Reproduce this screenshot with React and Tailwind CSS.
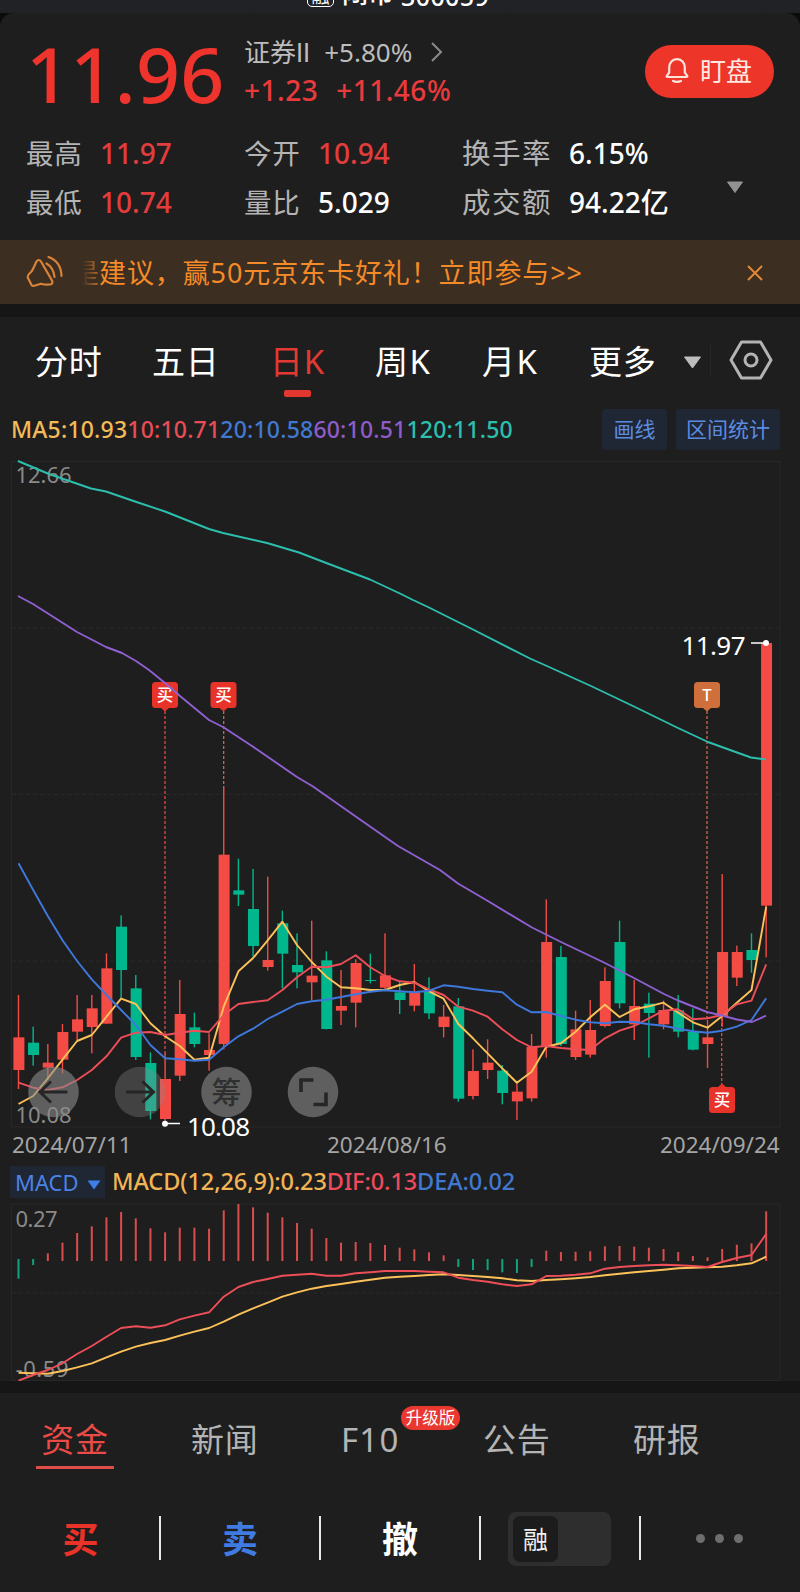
import React from "react";

const RED = "#f44b44";
const GREEN = "#00b78d";
const STEP = 14.66;
const xAt = (i) => 18.5 + STEP * i;
const priceY = (v) => 760 + v / 3;
const macdY = (v) => 1150 + v / 3;

// direction, high, body top, body bottom, low
const candles = [
  ["r", 705, 832, 930, 987], ["g", 800, 848, 885, 917], ["r", 852, 908, 923, 960], ["r", 792, 816, 899, 940],
  ["r", 705, 778, 815, 840], ["r", 705, 745, 801, 880], ["r", 580, 625, 791, 791], ["g", 466, 500, 630, 715],
  ["g", 645, 685, 891, 900], ["g", 877, 909, 1053, 1078], ["r", 880, 957, 1077, 1090], ["r", 660, 762, 947, 963],
  ["g", 758, 802, 852, 862], ["r", 820, 870, 885, 932], ["r", 82, 284, 852, 868], ["g", 296, 391, 404, 438],
  ["g", 327, 447, 558, 590], ["r", 350, 600, 621, 632], ["g", 452, 490, 581, 685], ["g", 520, 615, 637, 685],
  ["r", 482, 647, 667, 720], ["g", 574, 601, 807, 808], ["r", 630, 738, 752, 795], ["r", 598, 609, 728, 802],
  ["g", 581, 660, 663, 670], ["r", 520, 646, 683, 690], ["g", 665, 697, 720, 762], ["r", 612, 697, 737, 754],
  ["g", 652, 692, 760, 777], ["r", 735, 770, 801, 832], ["g", 714, 739, 1016, 1025], ["r", 868, 933, 1008, 1018],
  ["r", 838, 908, 930, 957], ["g", 915, 932, 999, 1033], ["r", 970, 995, 1024, 1080], ["r", 822, 861, 1015, 1025],
  ["r", 418, 546, 858, 893], ["g", 558, 591, 852, 858], ["r", 752, 808, 891, 900], ["r", 720, 810, 884, 893],
  ["r", 622, 663, 798, 802], ["g", 482, 546, 730, 745], ["r", 660, 738, 793, 840], ["g", 698, 731, 759, 893],
  ["r", 722, 750, 793, 808], ["g", 705, 751, 815, 832], ["g", 745, 815, 869, 871], ["r", 780, 832, 852, 924],
  ["r", 342, 576, 768, 800], ["r", 557, 576, 653, 678], ["g", 520, 570, 600, 638], ["r", -351, -351, 437, 592],
];

const ma5 = [1032, 1008, 955, 899, 843, 825, 770, 716, 732, 790, 829, 858, 899, 893, 740, 634, 594, 541, 485, 555, 606, 650, 682, 685, 690, 690, 675, 666, 694, 716, 792, 835, 880, 925, 968, 935, 860, 850, 815, 772, 734, 771, 748, 739, 728, 758, 787, 803, 768, 728, 690, 440];
const ma10 = [968, 983, 990, 982, 960, 930, 889, 833, 818, 816, 825, 818, 812, 816, 765, 732, 726, 721, 690, 652, 620, 622, 612, 586, 622, 648, 664, 668, 688, 705, 740, 752, 770, 808, 840, 862, 858, 864, 868, 870, 835, 812, 798, 775, 752, 748, 778, 775, 765, 733, 722, 613];
const ma20 = [310, 390, 468, 541, 603, 658, 705, 750, 795, 855, 895, 898, 902, 899, 862, 829, 806, 777, 755, 732, 724, 719, 711, 703, 695, 691, 694, 697, 692, 676, 680, 687, 692, 697, 734, 757, 756, 768, 779, 787, 790, 785, 786, 793, 797, 806, 814, 818, 812, 800, 780, 715];
const dif = [692, 675, 660, 640, 612, 588, 560, 534, 529, 533, 526, 508, 497, 487, 440, 411, 396, 387, 377, 374, 371, 377, 377, 370, 367, 363, 363, 363, 365, 367, 383, 390, 395, 403, 408, 403, 378, 377, 374, 370, 356, 351, 348, 346, 344, 346, 348, 351, 336, 324, 315, 252];
const dea = [668, 670, 671, 663, 652, 640, 622, 605, 590, 579, 570, 557, 545, 534, 515, 494, 475, 458, 440, 427, 416, 408, 402, 395, 389, 383, 380, 378, 375, 373, 375, 378, 381, 385, 391, 393, 390, 388, 385, 381, 376, 371, 367, 363, 359, 355, 353, 352, 350, 346, 340, 320];
const bars = [386, 345, 310, 278, 249, 229, 202, 186, 205, 235, 247, 233, 233, 236, 181, 162, 172, 188, 202, 219, 236, 264, 278, 276, 279, 285, 293, 298, 307, 316, 351, 360, 360, 367, 369, 351, 302, 306, 305, 304, 289, 288, 290, 293, 297, 306, 318, 322, 297, 284, 280, 184];

const MA60 =
  "18,596 33,604 77,632 106,647 122,653 136,661 149,670 165,683 180,696 209,720 223,727 252,746 297,777 313,786.5 355,816 398,846 440,870 458,883.5 487,900.5 532,927.5 546,934.5 561,942 605,963 634,978 664,994 678,1000.5 707,1012 722,1015.5 737,1019.5 752,1022 766,1015.7";
const MA120 =
  "18,461 49,474 91,488.5 106,491.5 135,501.5 165,511.5 209,529 223,533 267,543 299,552.5 325,562.5 370,579.5 400,593.5 413,600 428,607 472,629 530,658.5 548,666.5 591,686 634,706.5 678,728 708,742 737,752.5 751,757.5 766,759.5";

const poly = (vals, fy) => vals.map((v, i) => `${xAt(i).toFixed(1)},${fy(v).toFixed(1)}`).join(" ");

function Line({ points, color }) {
  return <polyline points={points} fill="none" stroke={color} strokeWidth="1.9" strokeLinejoin="round" />;
}

function Marker({ x, y, label, color, up }) {
  return (
    <g>
      <rect x={x - 13} y={y} width="26" height="26" rx="3.5" fill={color} />
      <path d={up ? `M${x - 4} ${y}l4 -3.5l4 3.5z` : `M${x - 4} ${y + 26}l4 3.5l4 -3.5z`} fill={color} />
      <text x={x} y={y + 19} fontSize="16.5" fontWeight="500" fill="#fff" textAnchor="middle">
        {label}
      </text>
    </g>
  );
}

function PriceChart() {
  return (
    <svg className="block h-[677px] w-[800px] overflow-visible" viewBox="0 455 800 677">
      <rect x="11.5" y="461.5" width="768.5" height="665.5" fill="none" stroke="#272727" />
      {[628, 794.5, 961].map((y) => (
        <line key={y} x1="12" x2="780" y1={y} y2={y} stroke="#292929" strokeDasharray="4 3" />
      ))}
      <g fill="#8a8a8a" fontSize="22">
        <text x="15.5" y="483" textLength="56">12.66</text>
        <text x="15.5" y="1122.5" textLength="56">10.08</text>
      </g>
      <g strokeDasharray="3 2" strokeWidth="1.2" stroke="#ee4f48">
        <line x1="165" x2="165" y1="711" y2="1054" />
        <line x1="223.7" x2="223.7" y1="711" y2="788" stroke="#e06a64" />
        <line x1="707" x2="707" y1="711" y2="1020" stroke="#dd6a4c" />
        <line x1="721.7" x2="721.7" y1="1018" y2="1086" />
      </g>
      {candles.map(([d, hi, top, bot, lo], i) => (
        <g key={i} fill={d === "r" ? RED : GREEN}>
          <rect x={xAt(i) - 0.7} y={priceY(hi)} width="1.4" height={(lo - hi) / 3} />
          <rect x={xAt(i) - 5.1} y={priceY(top)} width="11" height={(bot - top) / 3} />
        </g>
      ))}
      <Marker x={165} y={682} label="买" color="#e8332b" />
      <Marker x={223.5} y={682} label="买" color="#e8332b" />
      <Marker x={707} y={682} label="T" color="#cf6f3c" />
      <Marker x={722} y={1087} label="买" color="#e8332b" up />
      <Line points={poly(ma5, priceY)} color="#fcc259" />
      <Line points={poly(ma10, priceY)} color="#ee4e58" />
      <Line points={poly(ma20, priceY)} color="#3f78dc" />
      <Line points={MA60} color="#9060d2" />
      <Line points={MA120} color="#2cbfae" />
      <g fill="#8b8b8b" fillOpacity="0.6">
        <circle cx="53.5" cy="1092" r="25.3" />
        <circle cx="140" cy="1092" r="25.3" fillOpacity="0.34" />
        <circle cx="226.5" cy="1092" r="25.3" />
        <circle cx="313" cy="1092" r="25.3" />
      </g>
      <g fill="none" stroke="#262626" strokeWidth="3">
        <path d="M67.5 1092H40M51 1081.5L40 1092L51 1102.5" />
        <path d="M126 1092H153.5M142.5 1081.5L153.5 1092L142.5 1102.5" />
        <path d="M301 1092V1080H313.5M326 1092.5V1104.5H313.5" strokeWidth="3.6" />
      </g>
      <text x="226.5" y="1103" fontSize="30" fontWeight="500" fill="#2f2f2f" textAnchor="middle">筹</text>
      <g stroke="#fff" fill="#fff" strokeWidth="1.4">
        <path d="M165 1123.5H180M751 643H766" />
        <circle cx="165" cy="1123.7" r="2.3" />
        <circle cx="766" cy="643" r="2.3" />
      </g>
      <g fill="#fff" fontSize="26">
        <text x="187" y="1135.5" textLength="63">10.08</text>
        <text x="681.5" y="655" textLength="64">11.97</text>
      </g>
    </svg>
  );
}

function MacdChart() {
  return (
    <svg className="block h-[182px] w-[800px]" viewBox="0 1199 800 182">
      <rect x="11.5" y="1204" width="768.5" height="176.5" fill="none" stroke="#272727" />
      <line x1="12" x2="780" y1="1293" y2="1293" stroke="#292929" strokeDasharray="4 3" />
      {bars.map((v, i) => {
        const down = v > 335;
        const y0 = down ? macdY(327) : macdY(v);
        return <rect key={i} x={xAt(i) - 1} y={y0} width="2" height={down ? (v - 327) / 3 : (333 - v) / 3} fill={down ? "#11a27f" : "#d94d4d"} />;
      })}
      <g fill="#8a8a8a" fontSize="22">
        <text x="15.5" y="1227" textLength="42">0.27</text>
        <text x="15.5" y="1377" textLength="53">-0.59</text>
      </g>
      <Line points={poly(dea, macdY)} color="#fcc259" />
      <Line points={poly(dif, macdY)} color="#ee4e58" />
    </svg>
  );
}

function Stat({ label, value, wide, red }) {
  return (
    <div className="flex h-[49px] items-center whitespace-nowrap">
      <span className={wide ? "w-[107px] text-[28.5px] tracking-[1.5px] text-[#b4b4b4]" : "w-[74px] text-[27.5px] tracking-[0.8px] text-[#b4b4b4]"}>{label}</span>
      <span className={red ? "-mt-px text-[28px] font-medium text-[#e23d3c]" : "-mt-px text-[28px] font-medium text-white"}>{value}</span>
    </div>
  );
}

export default function App() {
  return (
    <div className="flex h-[1592px] w-[800px] flex-col overflow-hidden bg-[#1e1e1e] font-['Noto_Sans','Noto_Sans_CJK_SC',sans-serif] leading-none text-white">
      <div className="h-[30px] shrink-0 bg-gradient-to-b from-[#202226] from-45% to-[#0b0b0b] to-45%">
        <div className="flex h-[13px] items-end overflow-hidden pl-[307px]">
          <span className="mb-[6px] flex h-[20px] w-[27px] shrink-0 items-end justify-center rounded-[5px] border-[1.5px] border-white pb-px text-[18px]">融</span>
          <span className="mb-[7px] ml-[8px] shrink-0 text-[26px] font-medium">闭市</span>
          <span className="mb-[4px] ml-[7px] shrink-0 text-[25px] font-medium tracking-[0.4px]">300059</span>
        </div>
      </div>

      <header className="-mt-[17px] h-[227px] shrink-0 rounded-t-[14px] bg-[#1e1e1e]">
        <div className="flex h-[116px] pl-[26px]">
          <div className="h-full w-[218px] pt-[22px] text-[77px] font-medium tracking-[0.3px] text-[#ee342c]">11.96</div>
          <div className="w-[401px] whitespace-nowrap">
            <div className="mt-[25px] flex h-[28px] items-center text-[26px] text-[#bdbdbd]">
              <span>
                证券<span className="font-[Roboto]">II</span>
              </span>
              <span className="ml-[14px]">+5.80%</span>
              <svg className="ml-[18px] h-[22px] w-[14px]" viewBox="0 0 14 22" fill="none" stroke="#8b8b8b" strokeWidth="2">
                <path d="M2 2L11 11L2 20" />
              </svg>
            </div>
            <div className="mt-[10px] flex h-[28px] items-center text-[28px] font-medium tracking-[0.5px] text-[#ea3a3c]">
              <span>+1.23</span>
              <span className="ml-[18px]">+11.46%</span>
            </div>
          </div>
          <button className="mt-[32px] flex h-[53px] w-[129px] items-center rounded-full bg-[#ee352a] pb-[2px] pl-[20px] text-[26px] text-[#ffe9e2]">
            <svg className="mr-[11px] h-[27px] w-[24px]" viewBox="0 0 24 27" fill="none" stroke="#ffe4dc" strokeWidth="2.2" strokeLinecap="round" strokeLinejoin="round">
              <path d="M12 2.2C7 2.2 4.2 6 4.2 10.5V15.5L1.8 18.8Q1.3 20 2.6 20H21.4Q22.7 20 22.2 18.8L19.8 15.5V10.5C19.8 6 17 2.2 12 2.2zM8 24Q12 25.8 16 24" />
            </svg>
            <span>盯盘</span>
          </button>
        </div>
        <div className="flex pl-[26px]">
          <div className="w-[218px]">
            <Stat label="最高" value="11.97" red />
            <Stat label="最低" value="10.74" red />
          </div>
          <div className="w-[218px]">
            <Stat label="今开" value="10.94" red />
            <Stat label="量比" value="5.029" />
          </div>
          <div className="w-[264px]">
            <Stat label="换手率" value="6.15%" wide />
            <Stat label="成交额" value="94.22亿" wide />
          </div>
          <svg className="mt-[52px] h-[13px] w-[18px]" viewBox="0 0 18 13">
            <path d="M1.5 1H16.5L9 11.5z" fill="#929292" stroke="#929292" strokeLinejoin="round" />
          </svg>
        </div>
      </header>

      <div className="flex h-[64px] shrink-0 items-center bg-[#3c2e21] pl-[26px] text-[27px] text-[#f58a28]">
        <svg className="h-[34px] w-[38px]" viewBox="0 0 38 34" fill="none" stroke="#d98338" strokeWidth="2.2" strokeLinecap="round" strokeLinejoin="round">
          <path d="M10.500 6.500Q13 3.500 15 6.500L26 25.500Q27.500 29 24 29.500Q19 30 15 28.700L7.500 31Q5.500 31 4.800 28.500L1.700 22.500Q1.300 20.500 3.500 18.500Q6 16.500 7.200 13.500z" />
          <path d="M20.500 8.500Q27.500 12.500 28.500 22M22.500 2Q35 6.500 35.500 21" />
        </svg>
        <div className="ml-[18px] mt-[2px] flex w-[658px] items-center overflow-hidden whitespace-nowrap">
          <span className="flex w-[17px] shrink-0 justify-end overflow-hidden bg-gradient-to-r from-[#3c2e21] to-[#c07028] bg-clip-text leading-tight text-transparent">是</span>
          <span className="leading-tight tracking-[0.9px]">建议，赢50元京东卡好礼！立即参与&gt;&gt;</span>
        </div>
        <svg className="ml-[6px] mt-[2px] h-[18px] w-[18px]" viewBox="0 0 18 18" fill="none" stroke="#e08a35" strokeWidth="2">
          <path d="M2 2L16 16M16 2L2 16" />
        </svg>
      </div>
      <div className="h-[13px] shrink-0 bg-[#161616]" />

      <nav className="flex h-[84px] shrink-0 items-start whitespace-nowrap pt-[28px] text-[33px]">
        <span className="ml-[35px] w-[117px] tracking-[0.8px]">分时</span>
        <span className="w-[118px] tracking-[0.8px]">五日</span>
        <span className="flex w-[55px] flex-col items-center text-[#e23a33]">
          <span className="tracking-[1px]">日K</span>
          <span className="mt-[12px] h-[7px] w-[27px] rounded-[2px] bg-[#e2382f]" />
        </span>
        <span className="ml-[50px] w-[107px] tracking-[1.5px]">周K</span>
        <span className="w-[107px] tracking-[1.5px]">月K</span>
        <span className="w-[94px] tracking-[0.8px]">更多</span>
        <svg className="mt-[11px] h-[13px] w-[19px]" viewBox="0 0 19 13">
          <path d="M1.5 1H17.5L9.5 12z" fill="#bdbdbd" stroke="#bdbdbd" strokeLinejoin="round" />
        </svg>
        <span className="ml-[8px] h-[32px] w-px bg-[#262626]" />
        <svg className="-mt-[6px] ml-[17px] h-[42px] w-[46px]" viewBox="0 0 46 42" fill="none" stroke="#b4b4b4" strokeWidth="3">
          <path strokeLinejoin="round" d="M13.5 3H32.5L43 21L32.5 39H13.5L3 21z" />
          <circle cx="23" cy="21" r="6" />
        </svg>
      </nav>

      <div className="flex h-[54px] shrink-0 items-center pb-[4px] pl-[11px]">
        <div className="mt-[6px] flex w-[591px] whitespace-nowrap text-[23px] font-medium tracking-[0.2px]">
          <span className="text-[#f3ba58]">MA5:10.93</span>
          <span className="text-[#e84d55]">10:10.71</span>
          <span className="text-[#4178d0]">20:10.58</span>
          <span className="text-[#8d5cc8]">60:10.51</span>
          <span className="text-[#2cbfae]">120:11.50</span>
        </div>
        <div className="mt-[7px] flex h-[41px] w-[65px] items-center justify-center rounded-[3px] bg-[#1f2634] text-[21px] text-[#5b8ce0]">画线</div>
        <div className="ml-[9px] mt-[7px] flex h-[41px] w-[104px] items-center justify-center whitespace-nowrap rounded-[3px] bg-[#1f2634] text-[21px] text-[#5b8ce0]">区间统计</div>
      </div>

      <div className="h-[677px] shrink-0">
        <PriceChart />
      </div>

      <div className="flex h-[33px] shrink-0 pl-[12px] pt-[2px] text-[22.5px] text-[#a5a5a5]">
        <span className="w-[315px]">2024/07/11</span>
        <span className="w-[333px]">2024/08/16</span>
        <span>2024/09/24</span>
      </div>

      <div className="flex h-[34px] shrink-0 items-center whitespace-nowrap pl-[10px] text-[23.5px]">
        <div className="flex h-[32px] w-[95px] items-center bg-[#1f2634] pl-[5px] text-[22px] text-[#4a83e6]">
          <span className="w-[72px]">MACD</span>
          <svg className="mt-[5px] h-[10px] w-[14px]" viewBox="0 0 14 10">
            <path d="M0.5 0.5H13.5L7 9.5z" fill="#3f7fe8" />
          </svg>
        </div>
        <div className="ml-[7px] flex font-medium tracking-[-0.09px]">
          <span className="text-[#f3b455]">MACD(12,26,9):0.23</span>
          <span className="text-[#ee4a5c]">DIF:0.13</span>
          <span className="text-[#4178d0]">DEA:0.02</span>
        </div>
      </div>

      <div className="shrink-0">
        <MacdChart />
      </div>
      <div className="h-[12px] shrink-0 bg-[#161616]" />

      <nav className="flex h-[97px] shrink-0 whitespace-nowrap pt-[30px] text-[33px] text-[#b4b4b4]">
        <div className="ml-[36px] flex w-[78px] flex-col items-center text-[#ea4b46]">
          <span className="tracking-[0.8px]">资金</span>
          <span className="mt-[10px] h-[3px] w-[78px] bg-[#e04c47]" />
        </div>
        <span className="ml-[77px] w-[150px] tracking-[0.8px]">新闻</span>
        <span className="relative w-[142px] tracking-[1.2px]">
          F10
          <span className="absolute -top-[17px] left-[60px] flex h-[24px] w-[59px] items-center justify-center rounded-full bg-[#e8382f] text-[16.5px] tracking-normal text-white">升级版</span>
        </span>
        <span className="w-[150px] tracking-[0.8px]">公告</span>
        <span className="tracking-[0.8px]">研报</span>
      </nav>

      <div className="flex h-[102px] shrink-0 items-start pt-[26px] text-[36px] font-bold">
        <div className="flex h-[44px] w-[159px] items-center justify-center pl-[2px] pt-[4px] text-[#ea3328]">买</div>
        <div className="h-[44px] w-[2px] bg-[#e8e8e8]" />
        <div className="flex h-[44px] w-[158px] items-center justify-center pt-[4px] text-[#3f7be0]">卖</div>
        <div className="h-[44px] w-[2px] bg-[#e8e8e8]" />
        <div className="flex h-[44px] w-[158px] items-center justify-center pt-[4px]">撤</div>
        <div className="h-[44px] w-[2px] bg-[#e8e8e8]" />
        <div className="-mt-[4px] ml-[27px] flex h-[54px] w-[103px] items-center rounded-[8px] bg-[#2e2e2e] pl-[5px]">
          <div className="flex h-[46px] w-[45px] items-center justify-center rounded-[7px] bg-[#1c1c1c] text-[25px] font-normal text-[#f0f0f0]">融</div>
        </div>
        <div className="ml-[28px] h-[44px] w-[2px] bg-[#e8e8e8]" />
        <div className="ml-[55px] mt-[18px] flex gap-[10px]">
          <span className="size-[9px] rounded-full bg-[#6e6e6e]" />
          <span className="size-[9px] rounded-full bg-[#6e6e6e]" />
          <span className="size-[9px] rounded-full bg-[#6e6e6e]" />
        </div>
      </div>
    </div>
  );
}
